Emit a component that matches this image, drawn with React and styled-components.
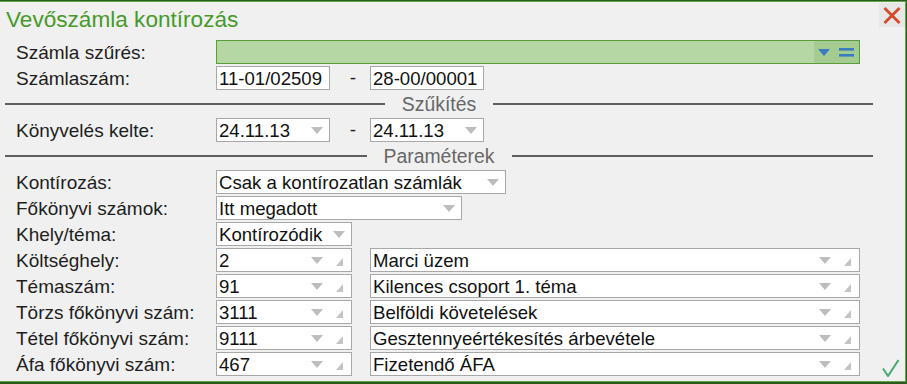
import React from 'react';
import styled, { createGlobalStyle } from 'styled-components';

const GlobalStyle = createGlobalStyle`
  html, body { margin: 0; padding: 0; }
  body {
    background: #2b5a1f;
    width: 907px;
    height: 384px;
    overflow: hidden;
    font-family: "Liberation Sans", Arial, sans-serif;
  }
`;

const Window = styled.div`
  box-sizing: border-box;
  margin-top: 1px;
  width: 906px;
  height: 381px;
  background: #f0f0f0;
  border: 1px solid #5fa845;
  border-left: none;
  display: flex;
  flex-direction: column;
`;

const TitleBar = styled.div`
  height: 34px;
  flex-shrink: 0;
  display: flex;
  align-items: center;
  justify-content: space-between;
`;

const Title = styled.h1`
  margin: 1px 0 0 6px;
  font-size: 22.6px;
  line-height: 22px;
  font-weight: normal;
  color: #48992a;
`;

const CloseButton = styled.button`
  align-self: flex-start;
  margin-top: 1px;
  width: 26px;
  height: 24px;
  padding: 0;
  border: none;
  background: #e7e7e7;
  display: flex;
  align-items: center;
  justify-content: center;
`;

const Body = styled.div`
  flex: 1;
  display: flex;
`;

const Form = styled.div`
  width: 868px;
  padding: 4px 0 0 5px;
  display: flex;
  flex-direction: column;
  gap: 2px;
`;

const Side = styled.div`
  flex: 1;
  display: flex;
  align-items: flex-end;
  padding: 0 0 4px 9px;
`;

const Row = styled.div`
  height: 24px;
  display: flex;
  align-items: center;
  padding-left: 11px;
`;

const Label = styled.div`
  width: 200px;
  flex-shrink: 0;
  font-size: 19px;
  line-height: 24px;
  padding-top: 1px;
  color: #1e1e1e;
  white-space: nowrap;
`;

const Field = styled.div`
  box-sizing: border-box;
  width: ${p => p.$w}px;
  height: 24px;
  flex-shrink: 0;
  display: flex;
  align-items: center;
  border: 1px solid ${p => (p.$green ? '#5b9d3c' : '#a8a8a8')};
  background: ${p => (p.$green ? '#b4d7a3' : '#ffffff')};
  padding-left: 2px;
  font-size: 18.6px;
  color: #111111;
`;

const FieldText = styled.span`
  flex: 1;
  white-space: nowrap;
  overflow: hidden;
  line-height: 22px;
  padding-top: 1px;
`;

const Gap = styled.div`
  width: 18px;
  flex-shrink: 0;
`;

const Dash = styled.div`
  box-sizing: border-box;
  width: 40px;
  padding-left: 6px;
  text-align: center;
  font-size: 19px;
  color: #1e1e1e;
`;

const GreenTools = styled.div`
  width: 45px;
  height: 100%;
  display: flex;
  align-items: center;
  background: #a5cc90;
`;

const Separator = styled.div`
  height: 24px;
  display: flex;
  align-items: center;
`;

const SepLine = styled.div`
  flex: 1;
  height: 2px;
  background: #5e5e5e;
`;

const SepText = styled.div`
  padding: 0 17px;
  font-size: 19.4px;
  color: #676767;
`;

const ArrowSvg = styled.svg`
  flex-shrink: 0;
  margin-right: ${p => p.$mr ?? 0}px;
  margin-left: ${p => p.$ml ?? 0}px;
`;

const GripSvg = styled.svg`
  flex-shrink: 0;
  align-self: flex-end;
  margin: 0 8px 5px 13px;
`;

const Arrow = ({ color = '#bdbdbd', mr, ml }) => (
  <ArrowSvg width="12" height="7" viewBox="0 0 12 7" $mr={mr} $ml={ml}>
    <polygon points="0,0 12,0 6,7" fill={color} />
  </ArrowSvg>
);

const Grip = () => (
  <GripSvg width="7" height="8" viewBox="0 0 7 8">
    <polygon points="7,0 7,8 0,8" fill="#c4c4c4" />
  </GripSvg>
);

const Equals = () => (
  <ArrowSvg width="15" height="9" viewBox="0 0 15 9" $ml={9}>
    <rect x="0" y="0" width="15" height="2.6" fill="#3b7bc2" />
    <rect x="0" y="6" width="15" height="2.6" fill="#3b7bc2" />
  </ArrowSvg>
);

const Drop = ({ w, children }) => (
  <Field $w={w}>
    <FieldText>{children}</FieldText>
    <Arrow mr={6} />
  </Field>
);

const Lookup = ({ w, children }) => (
  <Field $w={w}>
    <FieldText>{children}</FieldText>
    <Arrow />
    <Grip />
  </Field>
);

const lookupRows = [
  ['Költséghely:', '2', 'Marci üzem'],
  ['Témaszám:', '91', 'Kilences csoport 1. téma'],
  ['Törzs főkönyvi szám:', '3111', 'Belföldi követelések'],
  ['Tétel főkönyvi szám:', '9111', 'Gesztennyeértékesítés árbevétele'],
  ['Áfa főkönyvi szám:', '467', 'Fizetendő ÁFA'],
];

export default function App() {
  return (
    <>
      <GlobalStyle />
      <Window>
        <TitleBar>
          <Title>Vevőszámla kontírozás</Title>
          <CloseButton aria-label="Bezárás">
            <svg width="18" height="17" viewBox="0 0 18 17">
              <path d="M1.5 1 L16.5 16 M16.5 1 L1.5 16" stroke="#d64a2c" strokeWidth="2.8" fill="none" />
            </svg>
          </CloseButton>
        </TitleBar>
        <Body>
          <Form>
            <Row>
              <Label>Számla szűrés:</Label>
              <Field $w={644} $green>
                <FieldText />
                <GreenTools>
                  <Arrow color="#3b7bc2" ml={4} />
                  <Equals />
                </GreenTools>
              </Field>
            </Row>
            <Row>
              <Label>Számlaszám:</Label>
              <Field $w={114}><FieldText>11-01/02509</FieldText></Field>
              <Dash>-</Dash>
              <Field $w={114}><FieldText>28-00/00001</FieldText></Field>
            </Row>
            <Separator>
              <SepLine />
              <SepText>Szűkítés</SepText>
              <SepLine />
            </Separator>
            <Row>
              <Label>Könyvelés kelte:</Label>
              <Drop w={114}>24.11.13</Drop>
              <Dash>-</Dash>
              <Drop w={114}>24.11.13</Drop>
            </Row>
            <Separator>
              <SepLine />
              <SepText>Paraméterek</SepText>
              <SepLine />
            </Separator>
            <Row>
              <Label>Kontírozás:</Label>
              <Drop w={290}>Csak a kontírozatlan számlák</Drop>
            </Row>
            <Row>
              <Label>Főkönyvi számok:</Label>
              <Drop w={246}>Itt megadott</Drop>
            </Row>
            <Row>
              <Label>Khely/téma:</Label>
              <Drop w={136}>Kontírozódik</Drop>
            </Row>
            {lookupRows.map(([label, code, name]) => (
              <Row key={label}>
                <Label>{label}</Label>
                <Lookup w={136}>{code}</Lookup>
                <Gap />
                <Lookup w={490}>{name}</Lookup>
              </Row>
            ))}
          </Form>
          <Side>
            <svg width="18" height="18" viewBox="0 0 18 18">
              <polyline points="1,9.5 6,17 16.5,1" stroke="#47a96b" strokeWidth="2" fill="none" />
            </svg>
          </Side>
        </Body>
      </Window>
    </>
  );
}
